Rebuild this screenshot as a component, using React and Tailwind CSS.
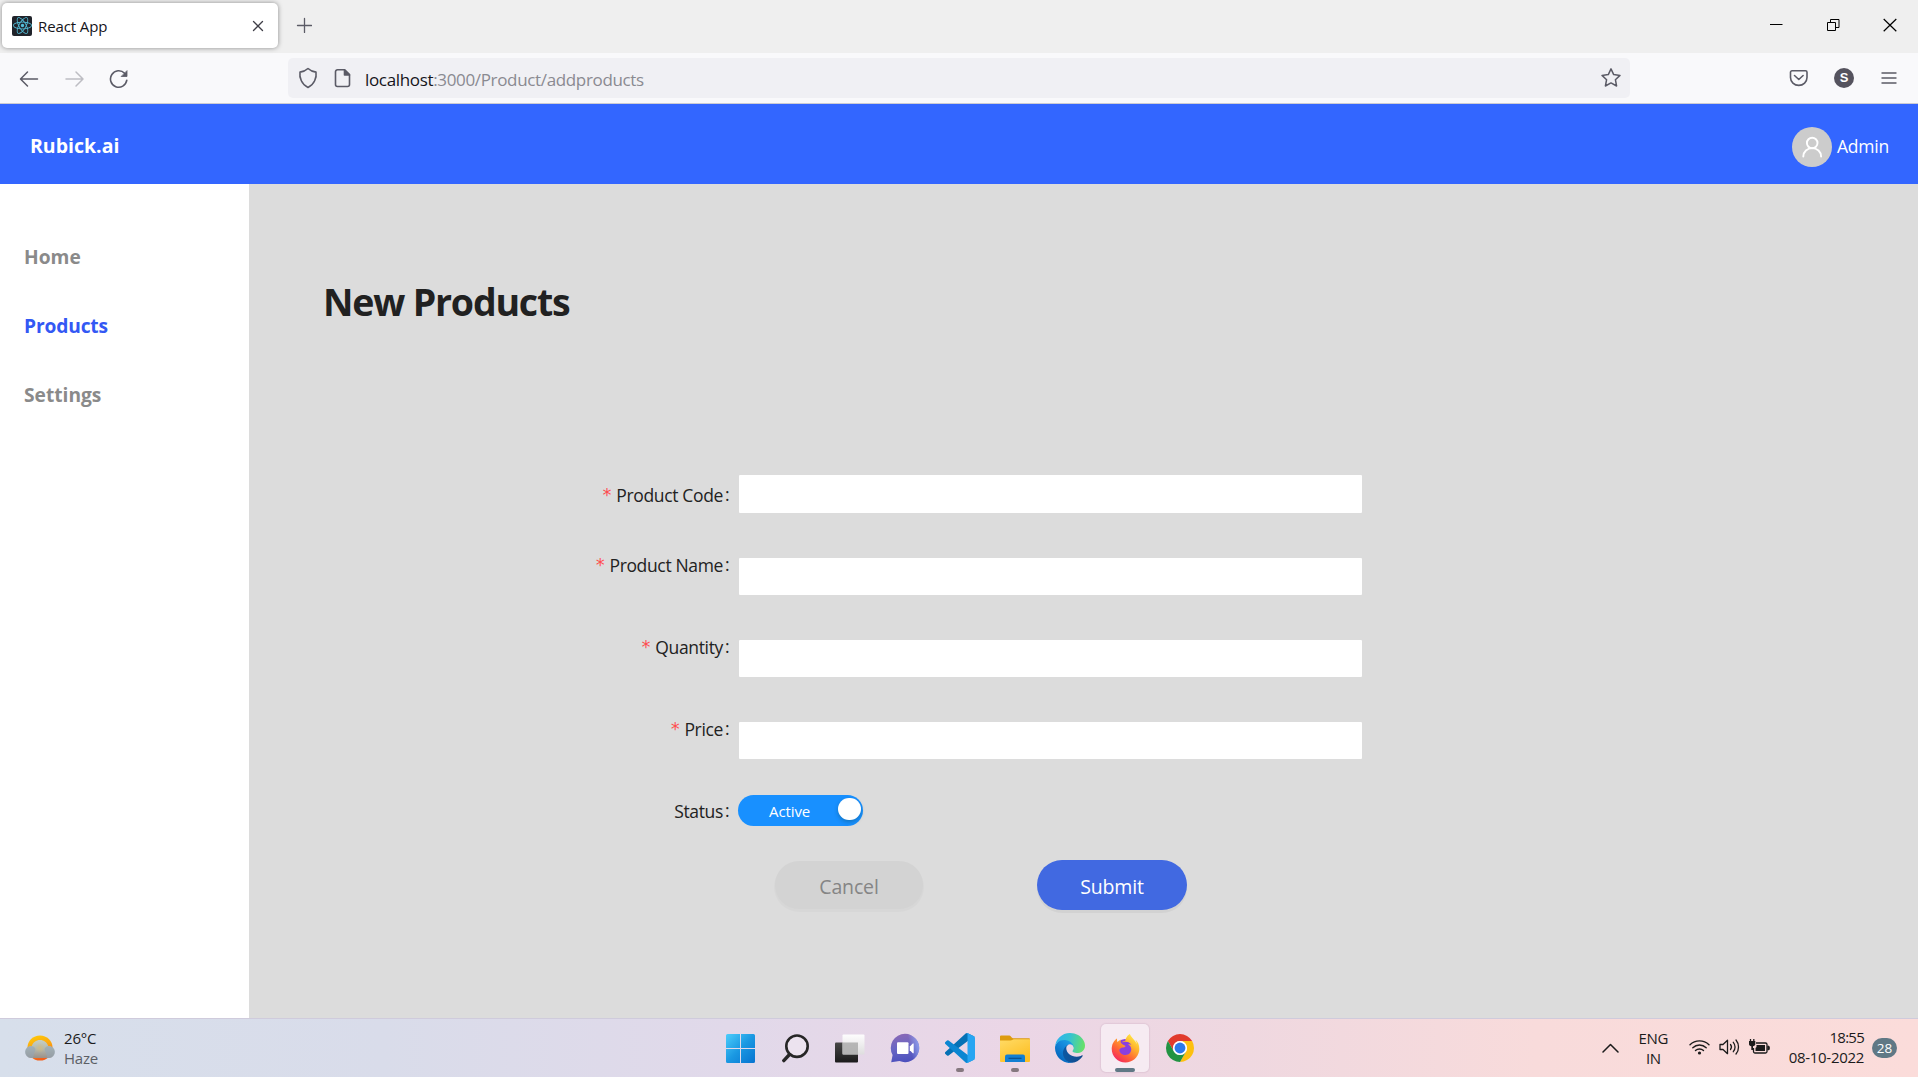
import React from 'react';
import { FaReact, FaFirefoxBrowser } from 'react-icons/fa';

const stroke = { fill: 'none', stroke: 'currentColor', strokeLinecap: 'round', strokeLinejoin: 'round' };

function TabStrip() {
  return (
    <div className="flex h-[53px] items-start bg-[#efefef]">
      <div className="ml-[2px] mt-[3px] flex h-[45px] w-[276px] items-center rounded-[5px] bg-white pl-[10px] pr-[14px] shadow-[0_0_5px_rgba(0,0,0,0.42)]">
        <span className="flex size-5 items-center justify-center rounded-[2px] bg-[#20232a]">
          <FaReact className="size-[19px] text-[#53bfd9]" />
        </span>
        <span className="ml-[6px] flex-1 text-[15px] leading-5 tracking-[-0.1px] text-[#15141a]">React App</span>
        <svg className="size-[12px] text-[#3f3e47]" viewBox="0 0 12 12" {...stroke} strokeWidth="1.3">
          <path d="M1.5 1.5l9 9M10.5 1.5l-9 9" />
        </svg>
      </div>
      <svg className="ml-[18px] mt-[17px] size-4 text-[#5b5b66]" viewBox="0 0 16 16" {...stroke} strokeWidth="1.3">
        <path d="M8.5 1.5v14M1.5 8.5h14" />
      </svg>
      <div className="ml-auto flex pr-[21px] pt-[18px] text-black">
        <svg className="h-[14px] w-[13px]" viewBox="0 0 13 14"><path d="M0 6.5h12.5" stroke="currentColor" /></svg>
        <svg className="ml-[44px] h-[14px] w-[13px]" viewBox="0 0 13 14" fill="none" stroke="currentColor">
          <path d="M.5 4.5h8v8h-8zM3.500 4.500v-3h8.500v8h-3.500" />
        </svg>
        <svg className="ml-[43px] h-[14px] w-[14px]" viewBox="0 0 14 14" stroke="currentColor" strokeWidth="1.2">
          <path d="M.7 1l12.600 12.200M13.300 1L.7 13.200" />
        </svg>
      </div>
    </div>
  );
}

function Toolbar() {
  return (
    <div className="flex h-[51px] items-start border-b border-[#cccbd3] bg-[#f9f9fb] pt-[5px] text-[#5b5b66]">
      <div className="flex h-10 w-[288px] items-center pl-[19px]">
        <svg className="mt-[2px] h-[18px] w-5" viewBox="0 0 20 18" {...stroke} strokeWidth="1.500">
          <path d="M18.500 9H1.800M8.500 2L1.500 9l7 7" />
        </svg>
        <svg className="ml-[26px] mt-[2px] h-[18px] w-5 text-[#bdbdc3]" viewBox="0 0 20 18" {...stroke} strokeWidth="1.500">
          <path d="M1 9h16.800M11 2l7 7-7 7" />
        </svg>
        <svg className="ml-[24px] mt-[2px] h-5 w-5" viewBox="0 0 20 20" {...stroke} strokeWidth="1.600">
          <path d="M17.800 11.200A8.200 8.200 0 1 1 15.600 4.300" />
          <path d="M18 2v5.500h-5.500z" fill="currentColor" strokeWidth="0.8" />
        </svg>
      </div>
      <div className="flex h-10 w-[1342px] items-center rounded-[5px] bg-[#f0f0f4] pl-[10px] pr-[8px]">
        <svg className="h-[22px] w-5" viewBox="0 0 20 22" {...stroke} strokeWidth="1.600">
          <path d="M10 1.500c2 1.900 5 3.200 8 3.600 0.900 5.400-1.800 12.600-8 15.400C3.800 17.700 1.100 10.500 2 5.100c3-.4 6-1.700 8-3.600z" />
        </svg>
        <svg className="ml-[16px] h-5 w-[18px]" viewBox="0 0 18 20" {...stroke} strokeWidth="1.600">
          <path d="M3.500 1.800h7.200l4.800 4.800v9.900a2 2 0 0 1-2 2h-10a2 2 0 0 1-2-2V3.800a2 2 0 0 1 2-2z" />
          <path d="M10.500 2v5h5z" fill="currentColor" />
        </svg>
        <span className="ml-[13px] mt-[3px] flex-1 text-[17px] leading-6 tracking-[-0.34px] text-[#8a8a91]">
          <span className="text-[#15141a]">localhost</span>:3000/Product/addproducts
        </span>
        <svg className="size-[22px]" viewBox="0 0 22 22" {...stroke} strokeWidth="1.500">
          <path d="M11 1.900l2.700 5.700 6.300.8-4.600 4.300 1.200 6.300-5.600-3.100L5.400 19l1.200-6.300L2 8.400l6.300-.8z" />
        </svg>
      </div>
      <div className="flex h-10 flex-1 items-center justify-end pr-[21px]">
        <svg className="h-[18px] w-5" viewBox="0 0 20 18" {...stroke} strokeWidth="1.600">
          <path d="M3 1.800h13.500a1.500 1.500 0 0 1 1.500 1.500v5.200a8.250 7.900 0 0 1-16.500 0V3.300A1.500 1.500 0 0 1 3 1.800z" />
          <path d="M5.500 6.500l4.300 4 4.300-4" />
        </svg>
        <span className="ml-[25px] flex size-5 items-center justify-center rounded-full bg-[#55535e] font-['Liberation_Sans'] text-[13px] font-bold leading-5 text-white">S</span>
        <svg className="ml-[27px] h-[14px] w-4" viewBox="0 0 16 14" {...stroke} strokeWidth="1.400">
          <path d="M1 2h14M1 7h14M1 12h14" />
        </svg>
      </div>
    </div>
  );
}

function Header() {
  return (
    <header className="flex h-20 items-center bg-[#3366ff] pl-[30px] pr-[29px] text-white">
      <span className="mt-[4px] text-[19.5px] font-bold leading-7">Rubick.ai</span>
      <span className="ml-auto mt-[6px] flex size-10 items-center justify-center rounded-full bg-[#cccccc]">
        <svg className="size-[22px]" viewBox="0 0 22 22" {...stroke} strokeWidth="1.900">
          <circle cx="11.200" cy="7" r="5.300" />
          <path d="M2.300 20.500a8.900 8.400 0 0 1 17.800 0" />
        </svg>
      </span>
      <span className="ml-[5px] mt-[3px] text-[17.5px] leading-6 tracking-[-0.2px]">Admin</span>
    </header>
  );
}

function Field({ label, first }) {
  return (
    <div className={first ? 'flex h-[38px] items-start' : 'flex h-[37px] items-start'}>
      <FieldLabel label={label} required offset={first ? 'mt-[8px]' : '-mt-[5px]'} />
      <input className="h-full w-[623px] rounded-[1px] bg-white outline-none" aria-label={label} />
    </div>
  );
}

function FieldLabel({ label, required, offset }) {
  return (
    <label className={`flex w-[490px] justify-end pr-[9px] text-[17.5px] leading-6 text-[#222222] ${offset}`}>
      {required && <span className="mr-[4px] font-['DejaVu_Sans_Mono'] text-[17.5px] text-[#ff4d4f]">*</span>}
      <span className="tracking-[-0.35px]">{label}</span>
      <span className="-mt-px ml-[2px] w-[5px]">:</span>
    </label>
  );
}

function Body() {
  return (
    <div className="flex h-[834px]">
      <nav className="flex w-[249px] flex-col gap-[41px] bg-white pl-[24px] pt-[59px] text-[19.2px] font-bold leading-7 text-[#8a8a8a]">
        <a>Home</a>
        <a className="tracking-[-0.15px] text-[#3358f4]">Products</a>
        <a>Settings</a>
      </nav>
      <main className="flex-1 bg-[#dcdcdc]">
        <h1 className="pl-[74px] pt-[94px] text-[37.5px] font-bold leading-[48px] tracking-[-1.2px] text-[#212121]">New Products</h1>
        <form className="mt-[149px] flex flex-col">
          <Field label="Product Code" first />
          <div className="mt-[45px] flex flex-col gap-[45px]">
            <Field label="Product Name" />
            <Field label="Quantity" />
            <Field label="Price" />
          </div>
          <div className="mt-[36px] flex h-[31px] items-start">
            <FieldLabel label="Status" offset="mt-[4px]" />
            <div className="-ml-px flex h-[31px] w-[125px] items-start rounded-full bg-[#1890ff] pl-[31px] pr-[2px] pt-[3px]">
              <span className="mt-px flex-1 text-[15px] leading-6 tracking-[-0.1px] text-white">Active</span>
              <span className="h-[22px] w-[23px] rounded-full bg-white shadow-[0_2px_4px_rgba(0,35,11,0.25)]" />
            </div>
          </div>
          <div className="mt-[34px] flex gap-[114px] pl-[526px] text-[19.5px] tracking-[-0.15px]">
            <button type="button" className="mt-px h-[48px] w-[148px] rounded-full bg-[#d3d3d3] pt-[3px] leading-7 text-[#858585] shadow-[0_2px_0_1px_rgba(0,0,0,0.018)]">Cancel</button>
            <button type="button" className="h-[50px] w-[150px] rounded-full bg-[#4169e1] pt-[3px] leading-7 text-white shadow-[0_3px_0_rgba(0,0,0,0.045)]">Submit</button>
          </div>
        </form>
      </main>
    </div>
  );
}

function WeatherIcon() {
  return (
    <svg className="h-[28px] w-[30px]" viewBox="0 0 30 28">
      <defs>
        <linearGradient id="sun" x1="0" y1="0" x2="0.3" y2="1">
          <stop offset="0" stopColor="#ffcf08" /><stop offset="0.55" stopColor="#fba310" /><stop offset="1" stopColor="#f3601a" />
        </linearGradient>
        <linearGradient id="cloud" x1="0" y1="0" x2="0" y2="1">
          <stop offset="0" stopColor="#c5cfc4" /><stop offset="0.5" stopColor="#b3b8ad" /><stop offset="1" stopColor="#9a9189" />
        </linearGradient>
        <radialGradient id="glow"><stop offset="0" stopColor="#d6bb78" stopOpacity="0.7" /><stop offset="1" stopColor="#d6bb78" stopOpacity="0" /></radialGradient>
      </defs>
      <circle cx="15" cy="14" r="12.600" fill="url(#sun)" />
      <path d="M6 24a6 6 0 0 1 .8-12C8 8.500 11 6 15 6s7 2.500 8.200 6A6 6 0 0 1 24 24z" fill="url(#cloud)" />
      <path d="M6 24a6 6 0 0 1 0-12c2.200 0 3.500 1 4.500 3L8 24zM24 24a6 6 0 0 0 0-12c-2.200 0-3.500 1-4.500 3l3 9z" fill="#93a5b6" opacity="0.6" />
      <circle cx="15" cy="14" r="5" fill="url(#glow)" />
    </svg>
  );
}

function WindowsIcon() {
  return (
    <svg className="size-[29px]" viewBox="0 0 29 29">
      <defs><linearGradient id="win" gradientUnits="userSpaceOnUse" x1="0" y1="0" x2="29" y2="29"><stop offset="0" stopColor="#4ccdfb" /><stop offset="0.5" stopColor="#1a98e2" /><stop offset="1" stopColor="#0673d0" /></linearGradient></defs>
      <path fill="url(#win)" d="M1.500 0H14v14H0V1.500A1.500 1.500 0 0 1 1.500 0zM15 0h12.500A1.500 1.500 0 0 1 29 1.500V14H15zM0 15h14v14H1.500A1.500 1.500 0 0 1 0 27.500zM15 15h14v12.500a1.500 1.500 0 0 1-1.500 1.500H15z" />
    </svg>
  );
}

function SearchIcon() {
  return (
    <svg className="size-[29px]" viewBox="0 0 29 29" fill="none" stroke="#262626" strokeLinecap="round">
      <circle cx="16" cy="12.200" r="10.700" strokeWidth="2.600" fill="#ece3ef" />
      <path d="M8.500 20.500L2.800 26.600" strokeWidth="3.400" />
    </svg>
  );
}

function TaskViewIcon() {
  return (
    <svg className="h-[29px] w-[30px]" viewBox="0 0 30 29">
      <defs>
        <linearGradient id="tvd" x1="0" y1="0" x2="0" y2="1"><stop offset="0" stopColor="#474747" /><stop offset="1" stopColor="#1b1b1b" /></linearGradient>
        <linearGradient id="tvl" x1="0" y1="0" x2="0" y2="1"><stop offset="0" stopColor="#fff" /><stop offset="1" stopColor="#dedede" /></linearGradient>
      </defs>
      <rect y="8.500" width="23" height="20" rx="1" fill="url(#tvd)" />
      <rect x="7.500" y=".5" width="22" height="20" rx="1" fill="url(#tvl)" opacity="0.95" />
      <path d="M7.500 8.500H23v12H7.500z" fill="#adadad" opacity="0.85" />
    </svg>
  );
}

function ChatIcon() {
  return (
    <svg className="size-[30px]" viewBox="0 0 30 30">
      <defs><linearGradient id="chat" x1="0.300" y1="0" x2="0.450" y2="1"><stop offset="0" stopColor="#8a69b6" /><stop offset="0.5" stopColor="#6866c4" /><stop offset="1" stopColor="#4c50bd" /></linearGradient>
        <linearGradient id="chatr" x1="0" y1="0.500" x2="1" y2="0.200"><stop offset="0.5" stopColor="#8fa2f0" stopOpacity="0" /><stop offset="1" stopColor="#8fa2f0" /></linearGradient></defs>
      <path d="M15 .8a14.200 14.200 0 1 1-5.500 27.300L1.200 29.200 2.600 22A14.200 14.200 0 0 1 15 .8z" fill="url(#chat)" />
      <path d="M15 .8a14.200 14.200 0 1 1-5.500 27.300z" fill="url(#chatr)" />
      <rect x="7" y="9.200" width="11.500" height="11.800" rx="1" fill="#fff" />
      <path d="M19.800 13.500l3-3h.9v9.700h-.9l-3-3z" fill="#fff" />
    </svg>
  );
}

function CodeIcon() {
  return (
    <svg className="size-[30px]" viewBox="0 0 100 100">
      <path fill="#0571b5" d="M96.460 10.800L75.860.88a6.230 6.230 0 0 0-7.110 1.200L1.300 63.580a4.170 4.170 0 0 0 0 6.170l5.510 5a4.170 4.170 0 0 0 5.320.24l81.230-61.620A4.140 4.140 0 0 1 100 16.670v-.24a6.250 6.250 0 0 0-3.540-5.630z" />
      <path fill="#0b86d2" d="M96.460 89.200l-20.600 9.920a6.230 6.230 0 0 1-7.110-1.200L1.300 36.420a4.170 4.170 0 0 1 0-6.170l5.510-5a4.170 4.170 0 0 1 5.320-.24l81.230 61.620A4.140 4.140 0 0 0 100 83.330v.24a6.250 6.250 0 0 1-3.540 5.630z" />
      <path fill="#27a5f2" d="M75.860 99.130a6.230 6.230 0 0 1-7.110-1.210C71.060 100.220 75 98.590 75 95.330V4.670C75 1.410 71.060-.22 68.750 2.080A6.230 6.230 0 0 1 75.860.87l20.600 9.910A6.250 6.250 0 0 1 100 16.410v67.180a6.250 6.250 0 0 1-3.540 5.630z" />
    </svg>
  );
}

function FolderIcon() {
  return (
    <svg className="h-[27px] w-[30px]" viewBox="0 0 30 27">
      <defs><linearGradient id="fold" x1="0" y1="0" x2="0.600" y2="1"><stop offset="0" stopColor="#ffdb66" /><stop offset="1" stopColor="#fdbf24" /></linearGradient></defs>
      <path d="M0 6V1.500A1 1 0 0 1 1 .5h8.500c1.500 0 2 2.800 3.500 2.800h16a1 1 0 0 1 1 1V8H0z" fill="#dd9b0f" />
      <path d="M0 5.500h10.500c1.500 0 2-1.300 3.500-1.300h16V26a1 1 0 0 1-1 1H1a1 1 0 0 1-1-1z" fill="url(#fold)" />
      <path d="M5 27v-5.500a2 2 0 0 1 2-2h16a2 2 0 0 1 2 2V27z" fill="#127fd3" />
      <path d="M8.500 23.300h13" stroke="#0b4f8e" strokeWidth="1.200" />
    </svg>
  );
}

function EdgeIcon() {
  return (
    <svg className="size-[30px]" viewBox="0 0 256 256">
      <defs>
        <linearGradient id="e1" gradientUnits="userSpaceOnUse" x1="63" y1="180" x2="241" y2="180"><stop offset="0" stopColor="#0c59a4" /><stop offset="1" stopColor="#114a8b" /></linearGradient>
        <linearGradient id="e2" gradientUnits="userSpaceOnUse" x1="157" y1="100" x2="46" y2="221"><stop offset="0" stopColor="#1b9de2" /><stop offset="0.4" stopColor="#1488dc" /><stop offset="1" stopColor="#0669bf" /></linearGradient>
        <linearGradient id="e3" gradientUnits="userSpaceOnUse" x1="20" y1="60" x2="245" y2="110"><stop offset="0" stopColor="#2fb5ea" /><stop offset="0.45" stopColor="#36c3cf" /><stop offset="1" stopColor="#66e06a" /></linearGradient>
      </defs>
      <g transform="translate(-4.630 -4.920)">
        <path fill="url(#e1)" d="M235.680 195.460a93.730 93.730 0 0 1-10.540 4.710 101.870 101.870 0 0 1-35.900 6.460c-47.320 0-88.540-32.550-88.540-74.320A31.480 31.480 0 0 1 117.130 105c-42.800 1.800-53.800 46.400-53.800 72.530 0 73.880 68.090 81.370 82.760 81.370 7.910 0 19.840-2.300 27-4.560l1.310-.44a128.340 128.340 0 0 0 66.600-52.800 4 4 0 0 0-5.320-5.640z" />
        <path fill="url(#e2)" d="M110.340 246.340A79.200 79.200 0 0 1 87.600 225a80.720 80.720 0 0 1 29.530-120c3.120-1.470 8.450-4.130 15.540-4a32.350 32.350 0 0 1 25.690 13 31.880 31.880 0 0 1 6.360 18.660c0-.21 24.460-79.600-80-79.600-43.900 0-80 41.660-80 78.210a130.150 130.150 0 0 0 12.110 56 128 128 0 0 0 156.380 67.110 75.550 75.550 0 0 1-62.780-8z" />
      </g>
      <path fill="url(#e3)" d="M152.290 148.860c-.81 1.050-3.300 2.500-3.300 5.660 0 2.610 1.700 5.120 4.720 7.230 14.380 10 41.490 8.680 41.560 8.680a59.560 59.560 0 0 0 30.270-8.350 61.380 61.380 0 0 0 30.430-52.880c.26-22.410-8-37.310-11.340-43.910C223.460 23.840 177.720 0 128 0A128 128 0 0 0 0 126.200c.48-36.540 36.800-66.050 80-66.050 3.500 0 23.460.34 42 10.070 16.340 8.580 24.900 18.940 30.850 29.210 6.180 10.670 7.280 24.150 7.280 29.520s-2.740 13.330-7.840 19.910z" />
    </svg>
  );
}

function FirefoxIcon() {
  return (
    <span className="relative flex size-[30px] items-center justify-center">
      <svg className="absolute inset-0 size-[30px]" viewBox="0 0 30 30">
        <defs>
          <linearGradient id="ff" x1="0.850" y1="0.050" x2="0.200" y2="0.950"><stop offset="0" stopColor="#fff04a" /><stop offset="0.35" stopColor="#ffb12c" /><stop offset="0.65" stopColor="#ff6a33" /><stop offset="1" stopColor="#f5265f" /></linearGradient>
        </defs>
        <circle cx="15" cy="15" r="9" fill="#8a3fe0" />
      </svg>
      <FaFirefoxBrowser className="relative size-[29px]" style={{ fill: 'url(#ff)' }} />
    </span>
  );
}

function ChromeIcon() {
  return (
    <svg className="size-[28px]" viewBox="0 0 48 48">
      <path fill="#e13b2d" d="M24 12h20.780a24 24 0 0 0-41.560 0L13.600 30A12 12 0 0 1 24 12z" />
      <path fill="#fdc00f" d="M34.400 30L24 48a24 24 0 0 0 20.780-36H24a12 12 0 0 1 10.400 18z" />
      <path fill="#229342" d="M13.600 30L3.220 12A24 24 0 0 0 24 48l10.400-18a12 12 0 0 1-20.800 0z" />
      <circle cx="24" cy="24" r="12" fill="#fff" />
      <circle cx="24" cy="24" r="9.300" fill="#2b79ea" />
    </svg>
  );
}

function TaskItem({ children, running, active }) {
  return (
    <div className={active ? 'relative flex h-12 w-12 items-center justify-center rounded-[5px] bg-[#f6ebf2] shadow-[0_0_1px_1px_rgba(150,110,140,0.13)]' : 'relative flex h-12 w-12 items-center justify-center'}>
      {children}
      {running && <span className="absolute bottom-0 left-1/2 h-[4px] w-[8px] -translate-x-1/2 rounded-full bg-[#85787f]" />}
      {active && <span className="absolute bottom-0 left-1/2 h-[4px] w-[20px] -translate-x-1/2 rounded-full bg-[#607885]" />}
    </div>
  );
}

function Taskbar() {
  return (
    <footer className="grid h-[59px] grid-cols-[716px_488px_1fr] border-t border-[#cfcbdc] bg-[linear-gradient(90deg,#d7dfeb_0%,#d9dcea_20%,#e1d9ea_38%,#ebd6e6_53%,#efd8e0_65%,#f8dbdb_80%,#fbdcda_100%)] text-[15px] leading-5 text-[#1b1b1b]">
      <div className="flex pl-[25px] pt-[15px]">
        <WeatherIcon />
        <div className="-mt-[6px] ml-[9px]">
          <div className="tracking-[-0.2px]">26°C</div>
          <div className="tracking-[-0.2px] text-[#5c5f66]">Haze</div>
        </div>
      </div>
      <div className="flex gap-[7px] pt-[5px]">
        <TaskItem><WindowsIcon /></TaskItem>
        <TaskItem><SearchIcon /></TaskItem>
        <TaskItem><TaskViewIcon /></TaskItem>
        <TaskItem><ChatIcon /></TaskItem>
        <TaskItem running><CodeIcon /></TaskItem>
        <TaskItem running><FolderIcon /></TaskItem>
        <TaskItem><EdgeIcon /></TaskItem>
        <TaskItem active><FirefoxIcon /></TaskItem>
        <TaskItem><ChromeIcon /></TaskItem>
      </div>
      <div className="flex items-start justify-end pr-[21px]">
        <svg className="mt-[24px] h-[10px] w-[17px]" viewBox="0 0 17 10" {...stroke} strokeWidth="1.500"><path d="M1 9l7.500-7.500L16 9" /></svg>
        <div className="ml-[19px] mt-[9px] w-[31px] text-center tracking-[-0.4px]">
          <div>ENG</div>
          <div>IN</div>
        </div>
        <svg className="ml-[20px] mt-[20px] h-[16px] w-[21px]" viewBox="0 0 21 16" {...stroke} strokeWidth="1.400">
          <path d="M1 5.800a13.400 13.400 0 0 1 19 0M3.800 8.800a9.500 9.500 0 0 1 13.400 0M6.500 11.600a5.700 5.700 0 0 1 8 0" />
          <circle cx="10.500" cy="14" r="1.600" fill="currentColor" stroke="none" />
        </svg>
        <svg className="ml-[9px] mt-[19px] h-[18px] w-[21px]" viewBox="0 0 21 18" {...stroke} strokeWidth="1.300">
          <path d="M1 6.500h3l4.500-4.200v13.400L4 11.500H1z" />
          <path d="M11.500 6.500a4 4 0 0 1 0 5M14.300 4.300a7.200 7.200 0 0 1 0 9.400M17 2a11 11 0 0 1 0 14" />
        </svg>
        <svg className="ml-[9px] mt-[19px] h-[17px] w-[21px]" viewBox="0 0 21 17" fill="none">
          <path d="M7 5h9.500a1.500 1.500 0 0 1 1.500 1.500v7a1.500 1.500 0 0 1-1.500 1.500H6a1.500 1.500 0 0 1-1.500-1.500V10" stroke="currentColor" strokeWidth="1.300" />
          <path d="M7.500 7h8.500v6H6.500v-3l1-1z" fill="currentColor" />
          <path d="M18.700 8h1l.8.8v2.400l-.8.8h-1z" fill="currentColor" stroke="currentColor" strokeWidth=".6" />
          <path d="M1.500 1v2M4.800 1v2" stroke="currentColor" strokeWidth="1.300" />
          <path d="M0 3h6.300v3c0 1.300-1 2.200-2.300 2.200V12H2.300V8.200C1 8.200 0 7.300 0 6z" fill="currentColor" />
        </svg>
        <div className="ml-[19px] mt-[8px] text-right">
          <div className="tracking-[-0.75px]">18:55</div>
          <div className="tracking-[-0.3px]">08-10-2022</div>
        </div>
        <span className="ml-[8px] mt-[19px] flex h-5 w-[25px] items-center justify-center rounded-full bg-[#607885] text-[13.5px] leading-5 text-white">28</span>
      </div>
    </footer>
  );
}

export default function App() {
  return (
    <div className="h-[1077px] w-[1918px] overflow-hidden whitespace-nowrap bg-white font-['Open_Sans','Noto_Sans',sans-serif]">
      <TabStrip />
      <Toolbar />
      <Header />
      <Body />
      <Taskbar />
    </div>
  );
}
